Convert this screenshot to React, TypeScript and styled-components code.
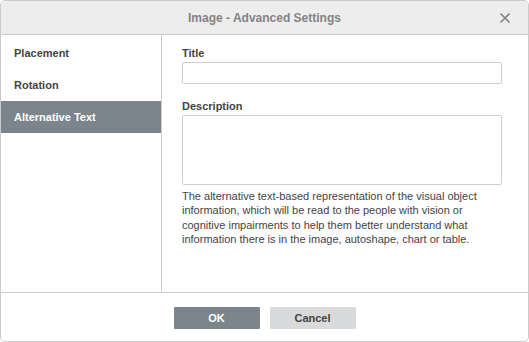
import React from "react";
import styled, { createGlobalStyle } from "styled-components";

const Global = createGlobalStyle`
  html, body {
    margin: 0;
    padding: 0;
    background: #ffffff;
  }
  body {
    font-family: "Liberation Sans", Arial, sans-serif;
  }
`;

const tabs = ["Placement", "Rotation", "Alternative Text"];

const Dialog = styled.div`
  box-sizing: border-box;
  width: 529px;
  height: 342px;
  border: 1px solid #cbcbcb;
  border-radius: 5px;
  background: #fff;
  display: flex;
  flex-direction: column;
  overflow: hidden;
`;

const Header = styled.div`
  position: relative;
  height: 33px;
  flex: none;
  background: #ededed;
  border-bottom: 1px solid #cbcbcb;
  display: flex;
  align-items: center;
  justify-content: center;
  font-size: 12px;
  font-weight: bold;
  color: #848484;
`;

const Close = styled.button`
  position: absolute;
  right: 17px;
  top: 11px;
  width: 12px;
  height: 12px;
  padding: 0;
  border: 0;
  background: none;
  display: flex;
`;

const Body = styled.div`
  flex: 1;
  display: flex;
  min-height: 0;
`;

const Side = styled.div`
  width: 160px;
  flex: none;
  border-right: 1px solid #cbcbcb;
  padding-top: 2px;
`;

const Tab = styled.div<{ $active?: boolean }>`
  height: 32px;
  display: flex;
  align-items: center;
  padding-left: 13px;
  font-size: 11px;
  font-weight: bold;
  color: ${(p) => (p.$active ? "#fff" : "#444")};
  background: ${(p) => (p.$active ? "#7d858c" : "transparent")};
`;

const Main = styled.div`
  flex: 1;
  padding: 11px 26px 0 20px;
`;

const Label = styled.div`
  font-size: 11px;
  font-weight: bold;
  color: #444;
  height: 16px;
  line-height: 14px;
`;

const Input = styled.div`
  box-sizing: border-box;
  width: 320px;
  height: 22px;
  border: 1px solid #cfcfcf;
  border-radius: 2px;
  margin-bottom: 15px;
`;

const Area = styled(Input)`
  height: 70px;
  margin-bottom: 4px;
`;

const Note = styled.p`
  margin: 0;
  width: 320px;
  font-size: 11px;
  line-height: 14.3px;
  color: #444;
`;

const Footer = styled.div`
  flex: none;
  border-top: 1px solid #cbcbcb;
  display: flex;
  justify-content: center;
  align-items: flex-start;
  padding-top: 14px;
  gap: 10px;
  box-sizing: border-box;
  height: 49px;
`;

const Button = styled.button<{ $primary?: boolean }>`
  width: 86px;
  height: 22px;
  border: 0;
  border-radius: 1px;
  font-family: "Liberation Sans", Arial, sans-serif;
  font-size: 11px;
  font-weight: bold;
  color: ${(p) => (p.$primary ? "#fff" : "#444")};
  background: ${(p) => (p.$primary ? "#7d858c" : "#d8dadc")};
`;

export default function App() {
  return (
    <>
      <Global />
      <Dialog>
        <Header>
          Image - Advanced Settings
          <Close>
            <svg width="12" height="12" viewBox="0 0 12 12">
              <path d="M1.5 1.5 L10.5 10.5 M10.5 1.5 L1.5 10.5" stroke="#848484" strokeWidth="1.6" />
            </svg>
          </Close>
        </Header>
        <Body>
          <Side>
            {tabs.map((t, i) => (
              <Tab key={t} $active={i === 2}>
                {t}
              </Tab>
            ))}
          </Side>
          <Main>
            <Label>Title</Label>
            <Input />
            <Label>Description</Label>
            <Area />
            <Note>
              The alternative text-based representation of the visual object
              information, which will be read to the people with vision or
              cognitive impairments to help them better understand what
              information there is in the image, autoshape, chart or table.
            </Note>
          </Main>
        </Body>
        <Footer>
          <Button $primary>OK</Button>
          <Button>Cancel</Button>
        </Footer>
      </Dialog>
    </>
  );
}
